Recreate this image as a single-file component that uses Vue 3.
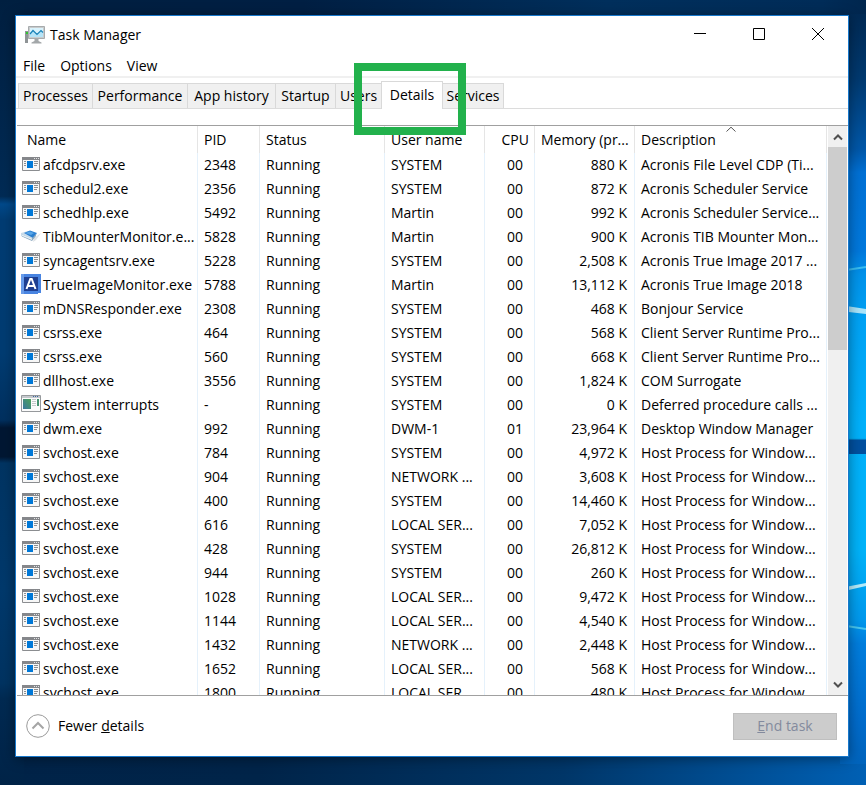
<script setup>
import { ref } from 'vue'

const menus = ['File', 'Options', 'View']
const tabs = ['Processes', 'Performance', 'App history', 'Startup', 'Users', 'Details', 'Services']
const activeTab = ref('Details')

const svc = 'Host Process for Window...'
const rows = [
  ['app', 'afcdpsrv.exe', '2348', 'SYSTEM', '00', '880 K', 'Acronis File Level CDP (Ti...'],
  ['app', 'schedul2.exe', '2356', 'SYSTEM', '00', '872 K', 'Acronis Scheduler Service'],
  ['app', 'schedhlp.exe', '5492', 'Martin', '00', '992 K', 'Acronis Scheduler Service...'],
  ['drive', 'TibMounterMonitor.e...', '5828', 'Martin', '00', '900 K', 'Acronis TIB Mounter Mon...'],
  ['app', 'syncagentsrv.exe', '5228', 'SYSTEM', '00', '2,508 K', 'Acronis True Image 2017 ...'],
  ['acronis', 'TrueImageMonitor.exe', '5788', 'Martin', '00', '13,112 K', 'Acronis True Image 2018'],
  ['app', 'mDNSResponder.exe', '2308', 'SYSTEM', '00', '468 K', 'Bonjour Service'],
  ['app', 'csrss.exe', '464', 'SYSTEM', '00', '568 K', 'Client Server Runtime Pro...'],
  ['app', 'csrss.exe', '560', 'SYSTEM', '00', '668 K', 'Client Server Runtime Pro...'],
  ['app', 'dllhost.exe', '3556', 'SYSTEM', '00', '1,824 K', 'COM Surrogate'],
  ['system', 'System interrupts', '-', 'SYSTEM', '00', '0 K', 'Deferred procedure calls ...'],
  ['app', 'dwm.exe', '992', 'DWM-1', '01', '23,964 K', 'Desktop Window Manager'],
  ['app', 'svchost.exe', '784', 'SYSTEM', '00', '4,972 K', svc],
  ['app', 'svchost.exe', '904', 'NETWORK ...', '00', '3,608 K', svc],
  ['app', 'svchost.exe', '400', 'SYSTEM', '00', '14,460 K', svc],
  ['app', 'svchost.exe', '616', 'LOCAL SER...', '00', '7,052 K', svc],
  ['app', 'svchost.exe', '428', 'SYSTEM', '00', '26,812 K', svc],
  ['app', 'svchost.exe', '944', 'SYSTEM', '00', '260 K', svc],
  ['app', 'svchost.exe', '1028', 'LOCAL SER...', '00', '9,472 K', svc],
  ['app', 'svchost.exe', '1144', 'LOCAL SER...', '00', '4,540 K', svc],
  ['app', 'svchost.exe', '1432', 'NETWORK ...', '00', '2,448 K', svc],
  ['app', 'svchost.exe', '1652', 'LOCAL SER...', '00', '568 K', svc],
  ['app', 'svchost.exe', '1800', 'LOCAL SER...', '00', '480 K', svc]
].map(([icon, name, pid, user, cpu, memory, description]) => ({ icon, name, pid, user, cpu, memory, description }))
</script>

<template>
  <div class="desktop">
    <svg class="wallpaper" viewBox="0 0 866 785" preserveAspectRatio="none" aria-hidden="true">
      <defs>
        <linearGradient id="top" x1="0" x2="1" y1="0" y2="0">
          <stop offset="0" stop-color="#001f40" /><stop offset=".35" stop-color="#001f43" />
          <stop offset=".7" stop-color="#002f5c" /><stop offset=".95" stop-color="#002c58" />
          <stop offset="1" stop-color="#00264e" />
        </linearGradient>
        <linearGradient id="bottom" x1="0" x2="1" y1="0" y2="0">
          <stop offset="0" stop-color="#002348" /><stop offset=".3" stop-color="#002449" />
          <stop offset=".65" stop-color="#003668" /><stop offset="1" stop-color="#0060b4" />
        </linearGradient>
        <linearGradient id="left" x1="0" x2="0" y1="0" y2="785" gradientUnits="userSpaceOnUse">
          <stop offset="0" stop-color="#001f40" /><stop offset=".25" stop-color="#002b55" />
          <stop offset=".26" stop-color="#00498a" /><stop offset=".28" stop-color="#003c73" />
          <stop offset=".45" stop-color="#003c72" /><stop offset=".535" stop-color="#00305f" />
          <stop offset=".545" stop-color="#001733" /><stop offset=".582" stop-color="#001733" />
          <stop offset=".59" stop-color="#003462" /><stop offset=".75" stop-color="#00396c" />
          <stop offset=".87" stop-color="#003361" /><stop offset=".89" stop-color="#002a52" />
          <stop offset="1" stop-color="#002347" />
        </linearGradient>
        <linearGradient id="right" x1="0" x2="0" y1="0" y2="785" gradientUnits="userSpaceOnUse">
          <stop offset="0" stop-color="#00264e" /><stop offset=".1" stop-color="#00396f" />
          <stop offset=".19" stop-color="#0057a8" /><stop offset=".22" stop-color="#0070d4" />
          <stop offset=".32" stop-color="#0078dc" /><stop offset=".35" stop-color="#0092ea" />
          <stop offset=".41" stop-color="#00a2f4" /><stop offset=".54" stop-color="#00b0fa" />
          <stop offset=".7" stop-color="#00b2f8" /><stop offset=".79" stop-color="#0098ec" />
          <stop offset=".82" stop-color="#007ddd" /><stop offset=".92" stop-color="#006bcb" />
          <stop offset="1" stop-color="#0060b4" />
        </linearGradient>
      </defs>
      <rect width="866" height="785" fill="url(#top)" />
      <rect y="700" width="866" height="85" fill="url(#bottom)" />
      <rect width="24" height="785" fill="url(#left)" />
      <rect x="840" y="14" width="26" height="750" fill="url(#right)" />
      <path d="M840 439h26v15h-26z" fill="#00509f" />
      <path d="M840 439h26" stroke="#00a0e8" stroke-width="1" />
      <path d="M840 271l26-4" stroke="#39bdf0" stroke-width="2" />
      <path d="M840 305l26 4v5l-26-3z" fill="#a9e4fa" />
      <path d="M840 588l26-5v3l-26 6z" fill="#b5ebfa" />
      <path d="M840 625l26 4" stroke="#48c6ee" stroke-width="2" />
    </svg>

    <main class="window">
      <header class="titlebar">
        <svg class="logo" width="20" height="18" viewBox="0 0 20 18" aria-hidden="true">
          <path d="M0 5h3v12H0z" fill="#8f9496" /><path d="M1 6h2v2H1z" fill="#31c72f" />
          <path d="M3.500.5h16v12h-16z" fill="#c9cccd" stroke="#a7abad" />
          <path d="M5 2h13v9H5z" fill="#d9f3fd" />
          <path d="M5 8l3-3 4 4 4-4 2 2v4H5z" fill="#b5e4f7" />
          <path d="M5 8l3-3.500 4 4L16 4.500l2 2" fill="none" stroke="#1681b8" stroke-width="1.200" />
          <path d="M9.500 13h4v2l3 1.500V17.500H6.500V16.500l3-1.500z" fill="#a3a7a9" />
        </svg>
        <h1>Task Manager</h1>
        <div class="controls">
          <button type="button" aria-label="Minimize">
            <svg width="12" height="12" viewBox="0 0 12 12"><path d="M0 5.500h12" /></svg>
          </button>
          <button type="button" aria-label="Maximize">
            <svg width="12" height="12" viewBox="0 0 12 12"><path d="M.5.5h11v11H.5z" /></svg>
          </button>
          <button type="button" aria-label="Close">
            <svg width="12" height="12" viewBox="0 0 12 12"><path d="M0 0l12 12M12 0L0 12" /></svg>
          </button>
        </div>
      </header>

      <nav class="menubar">
        <button v-for="m in menus" :key="m" type="button">{{ m }}</button>
      </nav>

      <div class="tabs" role="tablist">
        <div v-for="t in tabs" :key="t" class="tab-slot">
          <button
            type="button"
            role="tab"
            class="tab"
            :class="{ active: t === activeTab }"
            :aria-selected="t === activeTab"
            @click="activeTab = t"
          >{{ t }}</button>
          <span v-if="t === 'Details'" class="marker"></span>
        </div>
      </div>

      <section class="list">
        <div class="viewport">
          <table>
            <colgroup>
              <col class="c-name" /><col class="c-pid" /><col class="c-status" /><col class="c-user" />
              <col class="c-cpu" /><col class="c-memory" /><col />
            </colgroup>
            <thead>
              <tr>
                <th class="name" scope="col">Name</th>
                <th scope="col">PID</th>
                <th scope="col">Status</th>
                <th scope="col">User name</th>
                <th class="cpu" scope="col">CPU</th>
                <th scope="col">Memory (pr...</th>
                <th class="sorted" scope="col" aria-sort="ascending">
                  Description
                  <svg class="sort" width="10" height="6" viewBox="0 0 10 6"><path d="M.5 5.500L5 1.200 9.500 5.500" /></svg>
                </th>
              </tr>
            </thead>
            <tbody>
              <tr v-for="r in rows" :key="r.pid">
                <td class="name">
                  <div class="process">
                    <svg v-if="r.icon === 'app'" width="20" height="20" viewBox="0 0 20 20" aria-hidden="true">
                      <path d="M1.500 3.500h17v13h-17z" fill="#f7f7f7" stroke="#8b8d90" />
                      <path d="M1 3h18v3H1z" fill="#85878b" />
                      <path d="M13 4h1v1h-1zM15 4h1v1h-1zM17 4h1v1h-1z" fill="#e4e4e4" />
                      <path d="M6 7h6v7H6z" fill="#0078d7" />
                      <path d="M3 7.500h2M3 9.500h2M3 11.500h2M13 7.500h4M13 9.500h4M13 11.500h3" stroke="#8d9093" />
                    </svg>
                    <svg v-else-if="r.icon === 'drive'" width="20" height="20" viewBox="0 0 20 20" aria-hidden="true">
                      <path d="M13 12l7-5-5 7-3 2z" fill="#dfe2e5" />
                      <path d="M0 7l7-2 9 3-5 6.500L0 10z" fill="#c9dceb" />
                      <path d="M3 7l6-2.500 7 2.500-4 5z" fill="#2b7fd0" />
                      <path d="M4 7l5-1.500 4 1.500-3 2z" fill="#5aa7e8" />
                      <path d="M1 8.500l10 4 4-4.500v2l-4 5L1 10.500z" fill="#8da9bf" />
                      <path d="M1 8.500l10 4v1.500L1 10z" fill="#e6f0f6" />
                    </svg>
                    <svg v-else-if="r.icon === 'acronis'" width="20" height="20" viewBox="0 0 20 20" aria-hidden="true">
                      <path d="M0 0h20v19h-3v1H0z" fill="#4884e1" />
                      <path d="M0 0h3v20H0z" fill="#689be9" />
                      <path d="M3 3h14v14H3z" fill="#1e3f91" />
                      <path d="M5.500 15L9.300 5h1.400l3.800 10M7 12h6" fill="none" stroke="#fff" stroke-width="2" />
                    </svg>
                    <svg v-else width="20" height="20" viewBox="0 0 20 20" aria-hidden="true">
                      <defs>
                        <linearGradient id="sys" x1="0" y1="1" x2="1" y2="0">
                          <stop offset="0" stop-color="#3b78a0" /><stop offset="1" stop-color="#4ca257" />
                        </linearGradient>
                      </defs>
                      <path d="M.5 1.500h19v16H.5z" fill="#fbfbfb" stroke="#96999c" />
                      <path d="M1 2h18v2H1z" fill="#c4c8cc" />
                      <path d="M12 2h1v1h-1zM14 2h1v1h-1zM16 2h1v1h-1z" fill="#3764a1" />
                      <path d="M2 5h8v10H2z" fill="url(#sys)" />
                      <path d="M11 5.500h4M11 7.500h4M11 9.500h4M11 11.500h4" stroke="#c7cacc" />
                      <path d="M16 5h2v7h-2z" fill="#459270" />
                    </svg>
                    <span>{{ r.name }}</span>
                  </div>
                </td>
                <td>{{ r.pid }}</td>
                <td>Running</td>
                <td>{{ r.user }}</td>
                <td class="cpu">{{ r.cpu }}</td>
                <td class="memory">{{ r.memory }}</td>
                <td>{{ r.description }}</td>
              </tr>
            </tbody>
          </table>
        </div>
        <div class="scrollbar">
          <button type="button" aria-label="Scroll up">
            <svg width="10" height="8" viewBox="0 0 10 8"><path d="M1 6.500l4-4 4 4" /></svg>
          </button>
          <div class="track"><div class="thumb"></div></div>
          <button type="button" aria-label="Scroll down">
            <svg width="10" height="8" viewBox="0 0 10 8"><path d="M1 1.500l4 4 4-4" /></svg>
          </button>
        </div>
      </section>

      <footer class="footer">
        <button type="button" class="fewer">
          <svg width="24" height="24" viewBox="0 0 24 24" aria-hidden="true">
            <circle cx="12" cy="12" r="11.300" /><path d="M6.500 14.500L12 9l5.500 5.500" />
          </svg>
          <span>Fewer <u>d</u>etails</span>
        </button>
        <button type="button" class="end" disabled><u>E</u>nd task</button>
      </footer>
    </main>
  </div>
</template>

<style>
body {
  margin: 0;
}
</style>

<style scoped>
.desktop {
  position: relative;
  box-sizing: border-box;
  display: flex;
  height: 100vh;
  padding: 15px 17px 28px 15px;
  overflow: hidden;
  background: #002348;
  font: 14px/24px "Open Sans", "Noto Sans", sans-serif;
  color: #000;
}
.wallpaper {
  position: absolute;
  inset: 0;
  width: 100%;
  height: 100%;
}
button {
  margin: 0;
  padding: 0;
  border: 0;
  background: none;
  font: inherit;
  color: inherit;
}
.window {
  position: relative;
  flex: 1;
  min-width: 0;
  display: flex;
  flex-direction: column;
  border: 1px solid #1878cb;
  background: #fff;
  box-shadow: 0 2px 12px rgba(0, 0, 0, 0.4);
}
.titlebar {
  display: flex;
  align-items: center;
  height: 38px;
  padding-left: 9px;
}
h1 {
  flex: 1;
  margin: 0 0 0 5px;
  font: inherit;
}
.controls {
  display: flex;
  align-self: flex-start;
  gap: 1px;
  height: 36px;
  padding-right: 1px;
}
.controls button {
  display: flex;
  align-items: center;
  justify-content: center;
  width: 58px;
}
.controls svg {
  fill: none;
  stroke: #000;
}
.menubar {
  display: flex;
  gap: 15px;
  height: 22px;
  padding-left: 7px;
  border-bottom: 2px solid #f0f0f0;
}
.menubar button {
  line-height: 24px;
}
.tabs {
  display: grid;
  grid-template-columns: 75px 95px 88px 60px 46px 61px 61px;
  height: 27px;
  margin-top: 3px;
  padding-left: 2px;
  border-bottom: 1px solid #dcdcdc;
}
.tab-slot {
  position: relative;
  display: flex;
}
.tab {
  flex: 1;
  margin-top: 2px;
  border: 1px solid #d9d9d9;
  border-width: 1px 1px 0 0;
  background: #f0f0f0;
  white-space: nowrap;
}
.tab-slot:first-child .tab {
  border-left-width: 1px;
}
.tab.active {
  margin: 0 0 -1px -1px;
  padding-bottom: 2px;
  background: #fff;
  border-left-width: 1px;
}
.marker {
  position: absolute;
  z-index: 2;
  top: -18px;
  right: -23px;
  bottom: -27px;
  left: -28px;
  border: 8px solid #22b14c;
  pointer-events: none;
}
.list {
  flex: 1;
  display: flex;
  min-height: 0;
  margin: 16px 0 0 1px;
  padding-right: 1px;
  border: 1px solid #a0a0a0;
  border-width: 1px 0;
}
.viewport {
  flex: 1;
  min-width: 0;
  overflow: hidden;
}
table {
  width: 100%;
  table-layout: fixed;
  border-collapse: separate;
  border-spacing: 0;
}
.c-name {
  width: 181px;
}
.c-pid {
  width: 62px;
}
.c-status {
  width: 125px;
}
.c-user,
.c-memory {
  width: 100px;
}
.c-cpu {
  width: 50px;
}
th,
td {
  height: 24px;
  padding: 0 0 0 6px;
  border-right: 1px solid #e5f1fb;
  font-weight: normal;
  text-align: left;
  white-space: nowrap;
  overflow: hidden;
}
th {
  height: 27px;
  border-color: #e5e5e5;
}
th.name {
  padding-left: 10px;
}
td.name {
  padding-left: 4px;
}
th.cpu {
  padding-right: 5px;
  text-align: right;
}
td.cpu {
  padding-right: 11px;
  text-align: right;
}
td.memory {
  padding-right: 7px;
  text-align: right;
}
.sorted {
  position: relative;
}
.sort {
  position: absolute;
  top: 0;
  left: 50%;
  margin-left: -5px;
  fill: none;
  stroke: #555;
}
.process {
  display: flex;
  align-items: center;
  gap: 2px;
  height: 24px;
}
.process svg {
  flex: none;
  margin-bottom: 2px;
}
.scrollbar {
  display: flex;
  flex-direction: column;
  width: 19px;
  margin-left: 1px;
  background: #f0f0f0;
}
.scrollbar button {
  display: flex;
  align-items: center;
  justify-content: center;
  height: 21px;
}
.scrollbar svg {
  fill: none;
  stroke: #505050;
  stroke-width: 2;
}
.track {
  flex: 1;
}
.thumb {
  height: 38.5%;
  background: #cdcdcd;
}
.footer {
  display: flex;
  align-items: center;
  justify-content: space-between;
  height: 60px;
  padding: 0 11px 0 10px;
}
.fewer {
  display: flex;
  align-items: center;
  gap: 8px;
}
.fewer svg {
  fill: none;
  stroke: #9b9b9b;
}
.fewer path {
  stroke: #a5a5a5;
  stroke-width: 2;
}
.end {
  width: 104px;
  height: 27px;
  border: 1px solid #bfbfbf;
  background: #ccc;
  color: #838a9d;
}
</style>
